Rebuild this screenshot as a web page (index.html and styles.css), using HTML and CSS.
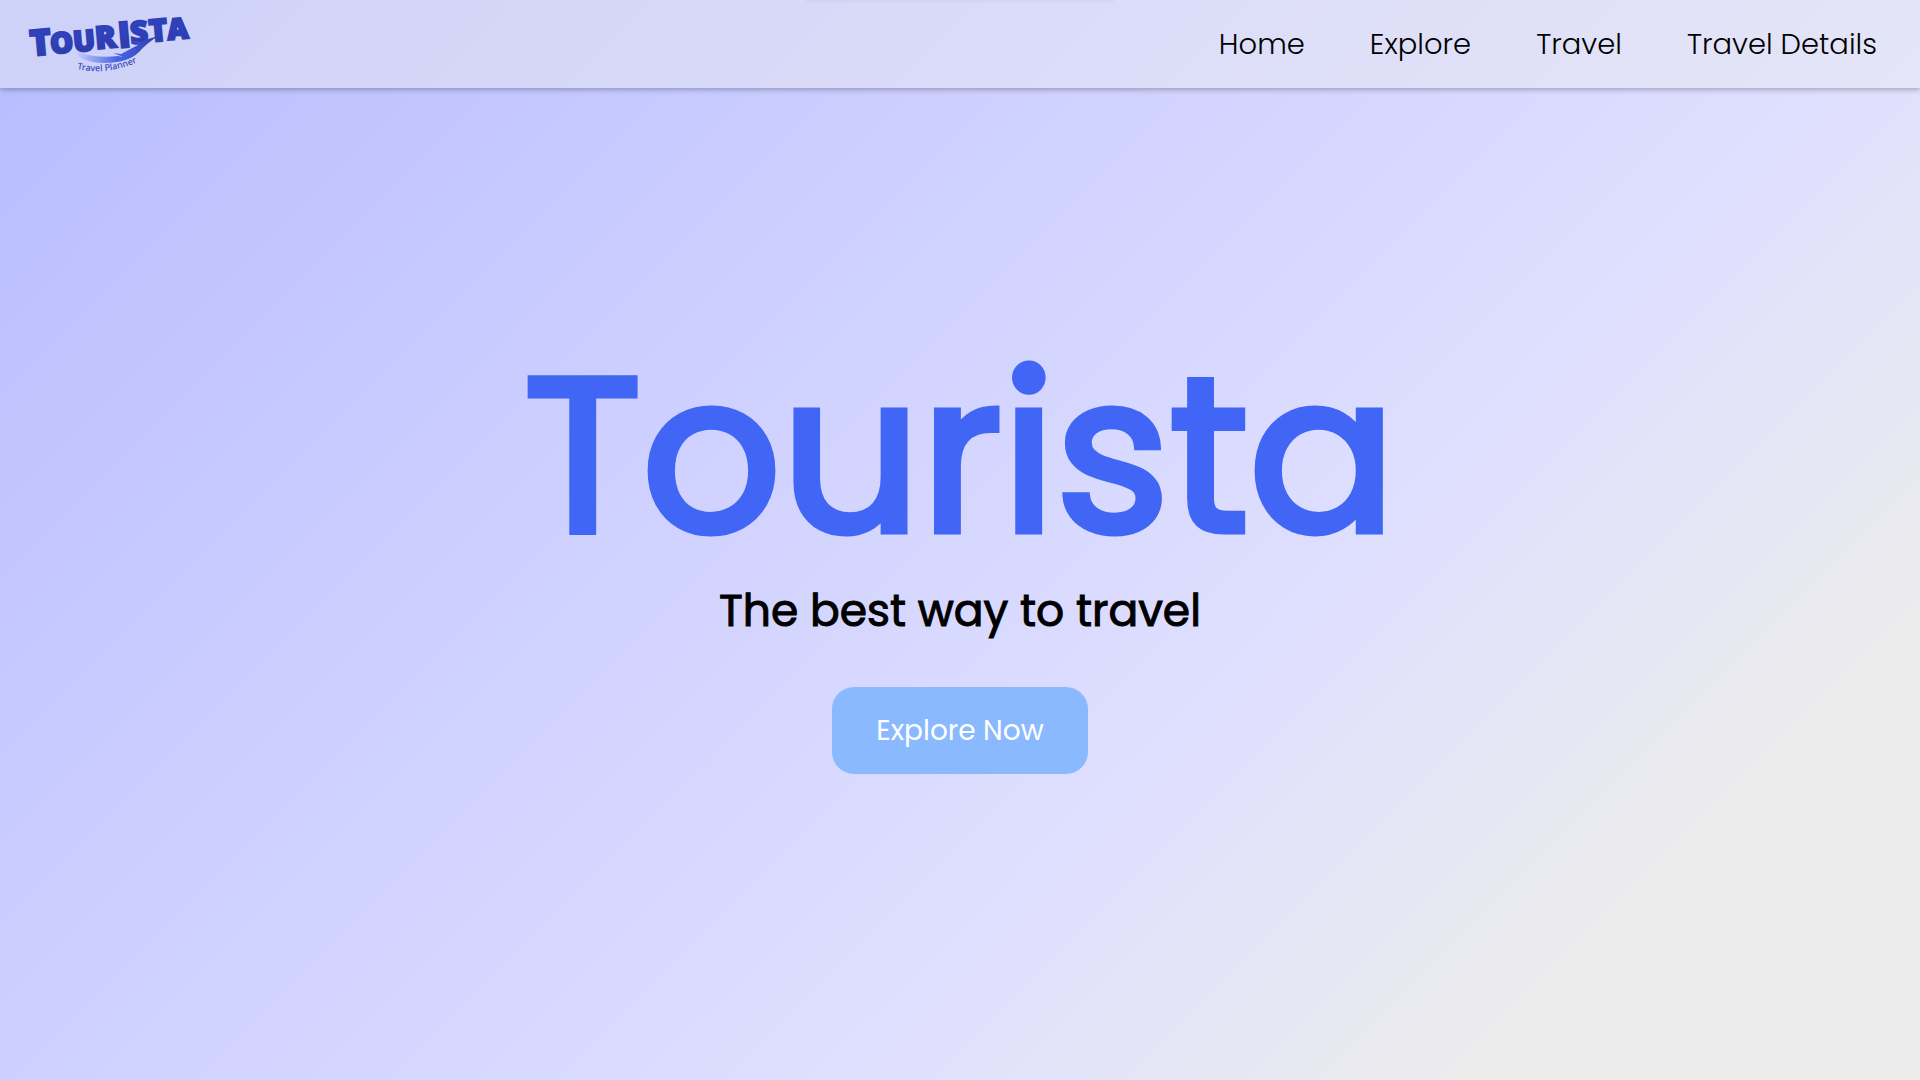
FILE: index.html
```html
<!DOCTYPE html>
<html lang="en">
<head>
    <meta charset="UTF-8">
    <meta name="viewport" content="width=device-width, initial-scale=1.0">
    <title>Tourista - Travel Planner</title>
    <link rel="stylesheet" href="styles.css">
</head>
<body>

    <header class="navbar">
        <a class="logo" href="#" aria-label="Tourista Travel Planner">
            <svg width="172" height="64" viewBox="24 12 172 64">
                <defs>
                    <linearGradient id="swoosh" x1="74" y1="0" x2="158" y2="0" gradientUnits="userSpaceOnUse">
                        <stop offset="0" stop-color="#4f6cf0" stop-opacity="0"/>
                        <stop offset="0.5" stop-color="#4a66e8"/>
                        <stop offset="1" stop-color="#2c3da8"/>
                    </linearGradient>
                    <linearGradient id="letters" x1="0" y1="0" x2="0" y2="1">
                        <stop offset="0.5" stop-color="#2f43c0"/>
                        <stop offset="1" stop-color="#2a3594"/>
                    </linearGradient>
                    <path id="tagline" d="M77 69 Q108 76 140 61"/>
                </defs>
                <g class="logo-name">
                    <text class="logo-big" x="31" y="56" transform="rotate(-5 31 56)">T</text>
                    <text x="51" y="54" transform="rotate(-5 51 54)">O</text>
                    <text x="74" y="52" transform="rotate(-5 74 52)">U</text>
                    <text class="logo-mid" x="96" y="49" transform="rotate(-5 96 49)">R</text>
                    <text class="logo-big" x="119" y="48" transform="rotate(-5 119 48)">I</text>
                    <text class="logo-mid" x="131" y="44" transform="rotate(-5 131 44)">S</text>
                    <text class="logo-mid" x="150" y="42" transform="rotate(-5 150 42)">T</text>
                    <text x="168" y="40" transform="rotate(-5 168 40)">A</text>
                </g>
                <path d="M74 51 Q96 59 118 56 L123 57 L113 53 L121 54 L138 45 L132 41 L141 42 Q150 38 158 36 Q146 44 139 52 Q128 63 104 63 Q82 63 74 51Z" fill="url(#swoosh)"/>
                <text class="logo-tagline"><textPath href="#tagline">Travel Planner</textPath></text>
            </svg>
        </a>
        <nav>
            <ul>
                <li><a href="#">Home</a></li>
                <li><a href="#">Explore</a></li>
                <li><a href="#">Travel</a></li>
                <li><a href="#">Travel Details</a></li>
            </ul>
        </nav>
    </header>

    <main class="hero">
        <h1>Tourista</h1>
        <p>The best way to travel</p>
        <button class="btn" type="button">Explore Now</button>
    </main>

</body>
</html>
```
FILE: styles.css
```css
/* General Styling */
* {
    margin: 0;
    padding: 0;
    box-sizing: border-box;
}

body {
    min-height: 100vh;
    display: flex;
    flex-direction: column;
    font-family: Poppins, Inter, sans-serif;
    background: linear-gradient(135deg, #b6bcff 0%, #ccceff 33%, #dfdfff 64%, #ececec 85%);
    color: #000000;
}

/* Navbar */
.navbar {
    position: relative;
    display: flex;
    justify-content: space-between;
    align-items: center;
    height: 88px;
    padding: 0 43px 0 24px;
    background: rgba(236, 236, 240, 0.45);
    box-shadow: 0 2px 5px rgba(0, 0, 0, 0.25);
}

/* soft shade at the top edge */
.navbar::before {
    content: "";
    position: absolute;
    top: 0;
    left: 42%;
    right: 42%;
    height: 4px;
    background: linear-gradient(rgba(0, 0, 0, 0.03), transparent);
}

.logo {
    display: flex;
}

.logo svg {
    overflow: visible;
}

.logo-name {
    font-family: "Open Sans", sans-serif;
    font-weight: 800;
    font-size: 29px;
    fill: url(#letters);
    stroke: #2f40b4;
    stroke-width: 2px;
}

.logo-mid {
    font-size: 31px;
}

.logo-big {
    font-size: 36px;
}

.logo-tagline {
    font-family: "Noto Sans", sans-serif;
    font-size: 9px;
    font-weight: 500;
    fill: #3348c0;
}

.navbar ul {
    list-style: none;
    display: flex;
    gap: 65px;
}

.navbar ul a {
    color: #000000;
    text-decoration: none;
    font-size: 29px;
    font-weight: 300;
}

/* Hero */
.hero {
    flex: 1;
    display: flex;
    flex-direction: column;
    align-items: center;
    padding-top: 239px;
}

.hero h1 {
    font-size: 218px;
    font-weight: 400;
    line-height: 256px;
    color: #4166f5;
    -webkit-text-stroke: 7px #4166f5;
}

.hero p {
    font-size: 44px;
    font-weight: 400;
    line-height: 56px;
    -webkit-text-stroke: 1px #000000;
}

.btn {
    margin-top: 48px;
    height: 87px;
    padding: 0 44px;
    border: none;
    border-radius: 22px;
    background: #8ab9ff;
    color: #ffffff;
    font-family: inherit;
    font-size: 28px;
    font-weight: 400;
    cursor: pointer;
}
```
